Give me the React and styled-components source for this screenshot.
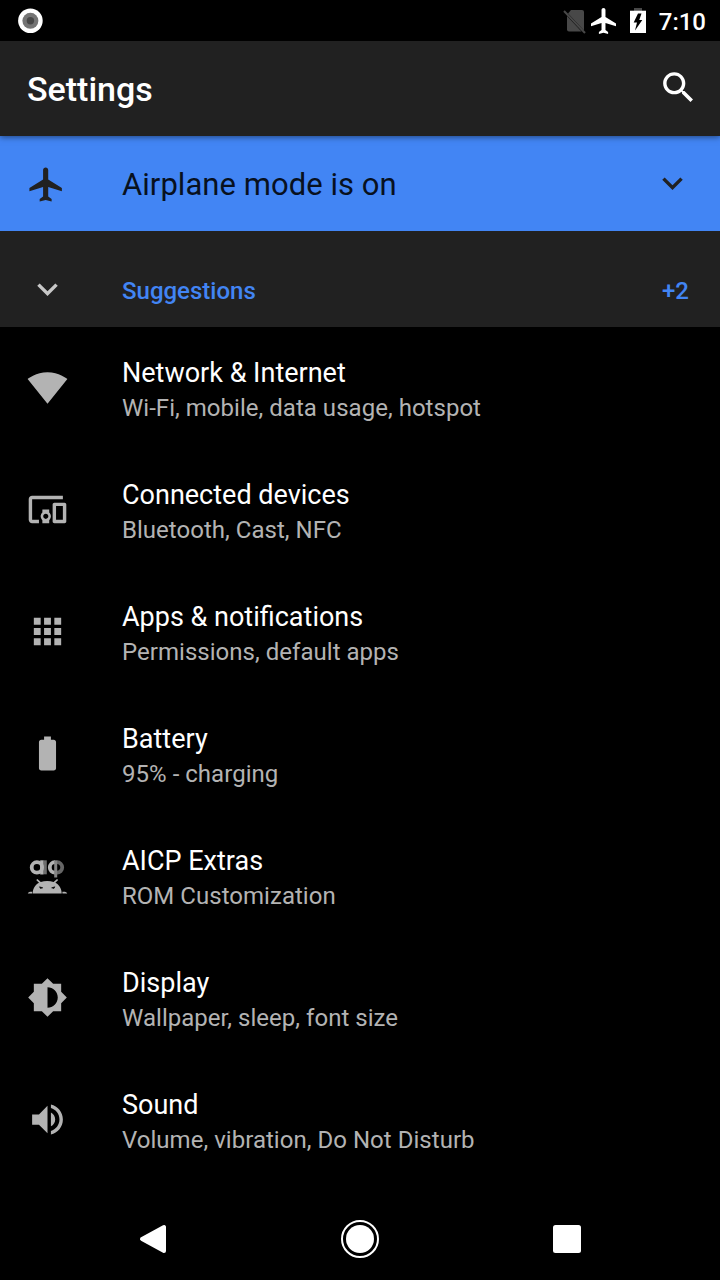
import React from "react";
import styled, { createGlobalStyle } from "styled-components";

const paths = {
  wifi: "M12.01 21.49L23.64 7c-.45-.34-4.93-4-11.64-4C5.28 3 .81 6.66.36 7l11.63 14.49.01.01.01-.01z",
  devices:
    "M3 6h18V4H3c-1.1 0-2 .9-2 2v12c0 1.1.9 2 2 2h4v-2H3V6zm10 6H9v1.78c-.61.55-1 1.33-1 2.22s.39 1.67 1 2.22V20h4v-1.78c.61-.55 1-1.34 1-2.22s-.39-1.67-1-2.22V12zm-2 5.5c-.83 0-1.5-.67-1.5-1.5s.67-1.5 1.5-1.5 1.5.67 1.5 1.5-.67 1.5-1.5 1.5zM22 8h-6c-.5 0-1 .5-1 1v10c0 .5.5 1 1 1h6c.5 0 1-.5 1-1V9c0-.5-.5-1-1-1zm-1 10h-4v-8h4v8z",
  apps: "M4 8h4V4H4v4zm6 12h4v-4h-4v4zm-6 0h4v-4H4v4zm0-6h4v-4H4v4zm6 0h4v-4h-4v4zm6-10v4h4V4h-4zm-6 4h4V4h-4v4zm6 6h4v-4h-4v4zm0 6h4v-4h-4v4z",
  battery:
    "M15.67 4H14V2h-4v2H8.33C7.6 4 7 4.6 7 5.33v15.33C7 21.4 7.6 22 8.33 22h7.33c.74 0 1.34-.6 1.34-1.33V5.33C17 4.6 16.4 4 15.67 4z",
  brightness:
    "M20 15.31L23.31 12 20 8.69V4h-4.69L12 .69 8.69 4H4v4.69L.69 12 4 15.31V20h4.69L12 23.31 15.31 20H20v-4.69zM12 18V6c3.31 0 6 2.69 6 6s-2.69 6-6 6z",
  volume:
    "M3 9v6h4l5 5V4L7 9H3zm13.5 3c0-1.77-1.02-3.29-2.5-4.03v8.05c1.48-.73 2.5-2.25 2.5-4.02zM14 3.23v2.06c2.89.86 5 3.54 5 6.71s-2.11 5.85-5 6.71v2.06c4.01-.91 7-4.49 7-8.77s-2.99-7.86-7-8.77z",
  airplane:
    "M21 16v-2l-8-5V3.5c0-.83-.67-1.5-1.5-1.5S10 2.67 10 3.5V9l-8 5v2l8-2.5V19l-2 1.5V22l3.5-1 3.5 1v-1.5L13 19v-5.5l8 2.5z",
  chevron: "M7.41 7.84L12 12.42l4.59-4.58L18 9.25l-6 6-6-6z",
  search:
    "M15.5 14h-.79l-.28-.27C15.41 12.59 16 11.11 16 9.5 16 5.91 13.09 3 9.5 3S3 5.91 3 9.5 5.91 16 9.5 16c1.61 0 3.09-.59 4.23-1.57l.27.28v.79l5 4.99L20.49 19l-4.99-5zm-6 0C7.01 14 5 11.99 5 9.5S7.01 5 9.5 5 14 7.01 14 9.5 11.99 14 9.5 14z",
};

const categories = [
  {
    title: "Network & Internet",
    summary: "Wi-Fi, mobile, data usage, hotspot",
    icon: "wifi",
  },
  {
    title: "Connected devices",
    summary: "Bluetooth, Cast, NFC",
    icon: "devices",
  },
  {
    title: "Apps & notifications",
    summary: "Permissions, default apps",
    icon: "apps",
  },
  { title: "Battery", summary: "95% - charging", icon: "battery" },
  { title: "AICP Extras", summary: "ROM Customization", icon: "aicp" },
  {
    title: "Display",
    summary: "Wallpaper, sleep, font size",
    icon: "brightness",
  },
  {
    title: "Sound",
    summary: "Volume, vibration, Do Not Disturb",
    icon: "volume",
  },
];

function Icon({ name, size = 41 }) {
  return (
    <IconSvg viewBox="0 0 24 24" $size={size}>
      <path d={paths[name]} />
    </IconSvg>
  );
}

function AicpIcon() {
  return (
    <IconSvg viewBox="0 0 41 41" $size={41}>
      <path d="M16.2 5.3h3.6v14h-3.6z" fill="#6e6e6e" />
      <g fill="none" strokeWidth="3.8">
        <path d="M30 7.2a5.2 5.2 0 1 1 0 10.400" stroke="#666" />
        <path d="M28 7.2a5.2 5.2 0 0 0 0 10.400" stroke="#b3b3b3" />
        <circle cx="9.9" cy="12.4" r="5.2" stroke="#b3b3b3" />
      </g>
      <path d="M13.2 5.3h3.200v14.200h-3.200z" />
      <path d="M27.2 5.3h3v17.200h-3z" fill="#858585" />
      <path d="M5.7 38.500c0-4.800 2.600-8.700 6.300-10.700l-2.800-2.800 1.200-1 3.400 3.100c4-1.500 8.800-1.500 12.800 0L30 24l1.200 1-2.800 2.800c3.700 2 6.300 5.900 6.300 10.700z" />
      <path d="M.8 38.500c.3-1.500 2-2 4.400-1.800v1.800zM40.200 38.500c-.3-1.500-2-2-4.800-1.800v1.800z" />
      <path
        d="M12.500 31.800l3.300 1-2.300.7zM27.900 31.800l-3.300 1 2.300.7z"
        fill="#000"
        stroke="#000"
        strokeWidth="0.6"
      />
    </IconSvg>
  );
}

export default function App() {
  return (
    <>
      <GlobalStyle />
      <Screen>
        <StatusBar>
          <RecordIcon viewBox="0 0 26 26">
            <circle cx="13.4" cy="12.8" r="12.3" fill="#fff" />
            <circle cx="13.4" cy="12.8" r="8" fill="#757575" />
            <circle cx="13.4" cy="12.8" r="3.7" fill="#484848" />
          </RecordIcon>
          <StatusIcons>
            <NoSimIcon viewBox="0 0 24 26">
              <path d="M9 2h11a2 2 0 0 1 2 2v18.5L6 5.5z" fill="#484848" />
              <path d="M5 8L19.5 23.5H7a2 2 0 0 1-2-2z" fill="#484848" />
              <path d="M2 3l21 22" stroke="#484848" strokeWidth="2" />
            </NoSimIcon>
            <PlaneIcon viewBox="2 2 19 20" preserveAspectRatio="none">
              <path d={paths.airplane} />
            </PlaneIcon>
            <ChargeIcon viewBox="0 0 16 26">
              <path d="M4 0h8v3H4z" fill="#484848" />
              <path d="M0 2.7h16V25H0z" />
              <path
                d="M8 5.5L3.7 14.5h3.3L5 22.5 12.3 12H9.3L11.5 5.5z"
                fill="#000"
              />
            </ChargeIcon>
            <Clock>7:10</Clock>
          </StatusIcons>
        </StatusBar>
        <Toolbar>
          <Title>Settings</Title>
          <Icon name="search" />
        </Toolbar>
        <Condition>
          <ConditionIcon>
            <Icon name="airplane" />
          </ConditionIcon>
          <ConditionText>Airplane mode is on</ConditionText>
          <Icon name="chevron" />
        </Condition>
        <Suggestions>
          <IconCell>
            <Icon name="chevron" />
          </IconCell>
          <SuggestionsText>Suggestions</SuggestionsText>
          <SuggestionsText>+2</SuggestionsText>
        </Suggestions>
        <List>
          {categories.map(({ title, summary, icon }) => (
            <Row key={title}>
              <RowIcon>
                {icon === "aicp" ? <AicpIcon /> : <Icon name={icon} />}
              </RowIcon>
              <div>
                <RowTitle>{title}</RowTitle>
                <RowSummary>{summary}</RowSummary>
              </div>
            </Row>
          ))}
        </List>
        <NavBar>
          <NavButton aria-label="Back">
            <NavSvg viewBox="0 0 40 40">
              <path
                d="M9 20L31 8v24z"
                strokeWidth="4"
                stroke="#fff"
                strokeLinejoin="round"
              />
            </NavSvg>
          </NavButton>
          <NavButton aria-label="Home">
            <NavSvg viewBox="0 0 40 40">
              <circle cx="20" cy="20" r="14" />
              <circle
                cx="20"
                cy="20"
                r="18"
                fill="none"
                stroke="#fff"
                strokeWidth="2"
              />
            </NavSvg>
          </NavButton>
          <NavButton aria-label="Recents">
            <NavSvg viewBox="0 0 40 40">
              <rect x="6" y="6" width="28" height="28" rx="2.5" />
            </NavSvg>
          </NavButton>
        </NavBar>
      </Screen>
    </>
  );
}

const GlobalStyle = createGlobalStyle`
  * {
    box-sizing: border-box;
  }
  body {
    margin: 0;
    background: #000;
    font-family: Roboto, sans-serif;
  }
`;

const Screen = styled.div`
  display: flex;
  flex-direction: column;
  width: 720px;
  height: 1280px;
  overflow: hidden;
  background: #000;
  color: #fff;
`;

const IconSvg = styled.svg`
  display: block;
  flex: none;
  width: ${(props) => props.$size}px;
  height: ${(props) => props.$size}px;
  fill: currentColor;
`;

const StatusBar = styled.header`
  display: flex;
  justify-content: space-between;
  align-items: center;
  flex: none;
  height: 41px;
  padding: 0 14px 0 17px;
`;

const RecordIcon = styled.svg`
  width: 26px;
  height: 26px;
`;

const StatusIcons = styled.div`
  display: flex;
  align-items: center;
  fill: #fff;
`;

const NoSimIcon = styled.svg`
  width: 24px;
  height: 26px;
  margin-right: 5px;
`;

const PlaneIcon = styled.svg`
  width: 25px;
  height: 26px;
  margin-right: 14px;
`;

const ChargeIcon = styled.svg`
  width: 16px;
  height: 26px;
  margin-right: 13px;
`;

const Clock = styled.span`
  padding-top: 2px;
  font-size: 24px;
  font-weight: 500;
  line-height: 28px;
`;

const Toolbar = styled.div`
  display: flex;
  justify-content: space-between;
  align-items: center;
  flex: none;
  height: 95px;
  padding: 0 21px 0 27px;
  background: #212121;
  box-shadow: 0 1px 6px rgba(0, 0, 0, 0.5);
  z-index: 1;
  svg {
    margin-bottom: 3px;
  }
`;

const Title = styled.h1`
  margin: 0;
  font-size: 34px;
  font-weight: 500;
  line-height: 40px;
`;

const IconCell = styled.div`
  flex: none;
  width: 95px;
`;

const ConditionIcon = styled(IconCell)`
  width: 96px;
`;

const RowIcon = styled(IconCell)`
  padding-bottom: 2px;
`;

const Condition = styled.div`
  display: flex;
  align-items: center;
  flex: none;
  height: 95px;
  padding: 2px 27px 0 26px;
  background: #4285f4;
  color: #212121;
`;

const ConditionText = styled.span`
  flex: 1;
  font-size: 31px;
  line-height: 36px;
  letter-spacing: 0.05px;
  color: #08111f;
`;

const Suggestions = styled.div`
  display: flex;
  align-items: center;
  flex: none;
  height: 96px;
  padding: 23px 31px 0 27px;
  background: #212121;
  color: #c8c8c8;
`;

const SuggestionsText = styled.span`
  font-size: 24px;
  font-weight: 500;
  line-height: 28px;
  color: #4285f4;
  &:last-child {
    margin-left: auto;
  }
`;

const List = styled.main`
  flex: 1;
`;

const Row = styled.div`
  display: flex;
  align-items: center;
  height: 122px;
  padding: 0 27px;
  color: #b3b3b3;
`;

const RowTitle = styled.div`
  padding-top: 3px;
  font-size: 27px;
  line-height: 32px;
  color: #fff;
`;

const RowSummary = styled.div`
  margin-top: 5px;
  font-size: 24px;
  line-height: 28px;
  letter-spacing: 0.03px;
`;

const NavBar = styled.nav`
  display: flex;
  justify-content: center;
  align-items: center;
  gap: 167px;
  flex: none;
  height: 82px;
`;

const NavButton = styled.button`
  padding: 0;
  border: 0;
  background: none;
`;

const NavSvg = styled.svg`
  display: block;
  width: 40px;
  height: 40px;
  fill: #fff;
`;
